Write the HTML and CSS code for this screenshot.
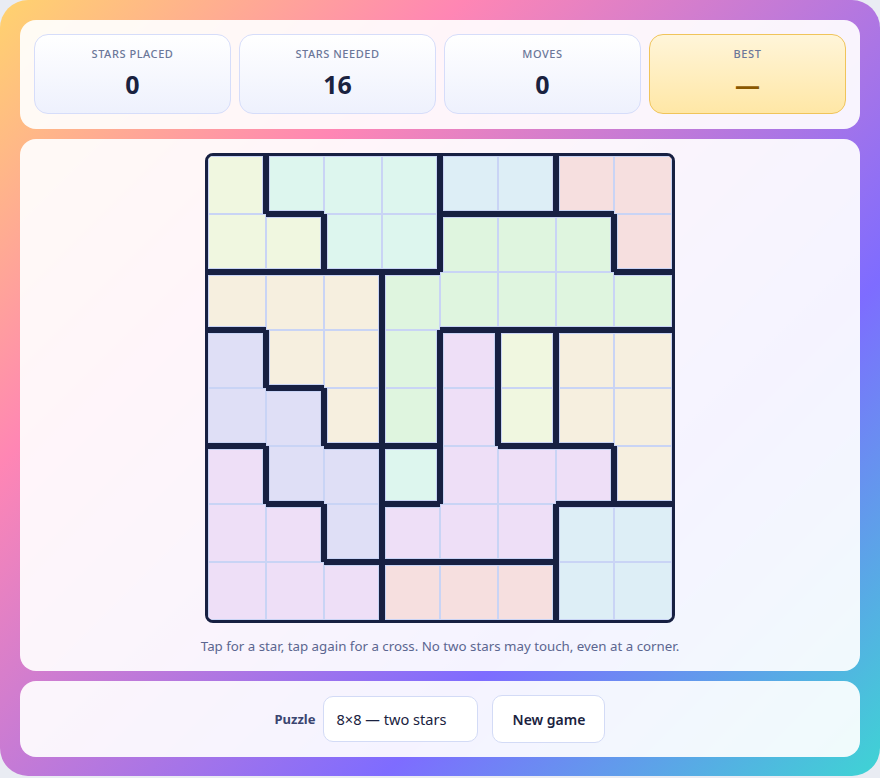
FILE: index.html
```html
<!DOCTYPE html>
<html>
<head>
  <meta charset="UTF-8">
  <title>Two Stars</title>
  <link rel="stylesheet" href="styles.css">
</head>
<body>
  <div class="app">
    <section class="panel stats">
      <div class="stat">
        <div class="stat-label">Stars placed</div>
        <div class="stat-value" id="placed">0</div>
      </div>
      <div class="stat">
        <div class="stat-label">Stars needed</div>
        <div class="stat-value" id="needed">16</div>
      </div>
      <div class="stat">
        <div class="stat-label">Moves</div>
        <div class="stat-value" id="moves">0</div>
      </div>
      <div class="stat best">
        <div class="stat-label">Best</div>
        <div class="stat-value" id="best">—</div>
      </div>
    </section>

    <section class="panel play">
      <div class="board" id="board"></div>
      <p class="hint">Tap for a star, tap again for a cross. No two stars may touch, even at a corner.</p>
    </section>

    <section class="panel controls">
      <label class="field-label" for="puzzle">Puzzle</label>
      <select id="puzzle" class="select">
        <option>8×8 — two stars</option>
      </select>
      <button class="btn" id="new-game">New game</button>
    </section>
  </div>

  <script>
    // region layout, one letter per cell
    const REGIONS = [
      'ABBBCCDD',
      'AABBEEED',
      'FFFEEEEE',
      'GFFEHIJJ',
      'GGFEHIJJ',
      'KGGLHHHJ',
      'KKGHHHMM',
      'KKKNNNMM'
    ];

    // pastel tint for each region
    const TINTS = {
      A: 'lime', B: 'mint', C: 'sky', D: 'rose', E: 'green', F: 'sand', G: 'iris',
      H: 'lilac', I: 'lime', J: 'sand', K: 'lilac', L: 'mint', M: 'sky', N: 'rose'
    };

    const board = document.getElementById('board');
    const size = REGIONS.length;
    let moves = 0;

    function regionAt(r, c) {
      if (r < 0 || c < 0 || r >= size || c >= size) return null;
      return REGIONS[r][c];
    }

    for (let r = 0; r < size; r++) {
      for (let c = 0; c < size; c++) {
        const id = REGIONS[r][c];
        const cell = document.createElement('button');
        cell.className = 'cell tint-' + TINTS[id];
        // thick walls where the neighbour belongs to another region
        const up = regionAt(r - 1, c), down = regionAt(r + 1, c);
        const left = regionAt(r, c - 1), right = regionAt(r, c + 1);
        if (up && up !== id) cell.classList.add('wall-top');
        if (down && down !== id) cell.classList.add('wall-bottom');
        if (left && left !== id) cell.classList.add('wall-left');
        if (right && right !== id) cell.classList.add('wall-right');
        cell.dataset.state = '0';
        cell.addEventListener('click', () => {
          const next = (Number(cell.dataset.state) + 1) % 3;
          cell.dataset.state = String(next);
          cell.textContent = next === 1 ? '★' : next === 2 ? '×' : '';
          moves++;
          document.getElementById('moves').textContent = moves;
          document.getElementById('placed').textContent =
            board.querySelectorAll('[data-state="1"]').length;
        });
        board.appendChild(cell);
      }
    }
  </script>
</body>
</html>
```

FILE: styles.css
```css
html, body {
  margin: 0;
  padding: 0;
}

body {
  background: #e9ecf3;
  font-family: "Segoe UI", "Noto Sans", sans-serif;
  color: #1a2240;
}

.app {
  display: flex;
  flex-direction: column;
  gap: 10px;
  padding: 20px 20px 19px;
  border-radius: 28px;
  background: linear-gradient(135deg, #ffd36e 0%, #ff86b4 28%, #7e6cff 70%, #3ed4d4 100%);
}

.panel {
  background: rgba(255, 255, 255, 0.92);
  border-radius: 16px;
}

/* score cards */
.stats {
  display: grid;
  grid-template-columns: repeat(4, 1fr);
  gap: 8px;
  padding: 14px 14px 15px;
}

.stat {
  height: 80px;
  box-sizing: border-box;
  border: 1px solid #d6ddfa;
  border-radius: 14px;
  background: linear-gradient(180deg, #ffffff, #eef1fd);
  text-align: center;
  padding-top: 11px;
}

.stat-label {
  font-size: 11px;
  font-weight: 500;
  letter-spacing: 0.05em;
  text-transform: uppercase;
  color: #6b7799;
  line-height: 16px;
}

.stat-value {
  font-size: 25px;
  font-weight: 700;
  line-height: 32px;
  margin-top: 6px;
  color: #1a2240;
}

.stat.best {
  border-color: #f0c45a;
  background: linear-gradient(180deg, #fff5d9, #ffe7a6);
}

.stat.best .stat-value {
  color: #8a5800;
}

/* board */
.play {
  display: flex;
  flex-direction: column;
  align-items: center;
  padding: 14px 14px 16px;
}

.board {
  display: grid;
  grid-template-columns: repeat(8, 58px);
  grid-template-rows: repeat(8, 58px);
  border: 3px solid #172042;
  border-radius: 8px;
  background: #172042;
  overflow: hidden;
}

.cell {
  box-sizing: border-box;
  margin: 0;
  padding: 0;
  border: 0 solid #172042;
  box-shadow: inset 0 0 0 1px #c9d4f5;
  font: 700 26px "Noto Sans", sans-serif;
  color: #172042;
  cursor: pointer;
}

.wall-top { border-top-width: 3px; }
.wall-bottom { border-bottom-width: 3px; }
.wall-left { border-left-width: 3px; }
.wall-right { border-right-width: 3px; }

.tint-lime { background: #f0f7e0; }
.tint-mint { background: #ddf6ee; }
.tint-sky { background: #ddeef6; }
.tint-rose { background: #f6dfdf; }
.tint-green { background: #dff5df; }
.tint-sand { background: #f6efdf; }
.tint-iris { background: #dfdff6; }
.tint-lilac { background: #eedff7; }

.hint {
  margin: 14px 0 0;
  font-size: 13.3px;
  line-height: 18px;
  color: #5b6690;
}

/* puzzle picker */
.controls {
  display: flex;
  justify-content: center;
  align-items: center;
  padding: 14px 14px 14px;
}

.field-label {
  font-size: 13px;
  font-weight: 700;
  color: #3b4570;
  margin-right: 8px;
}

.select {
  appearance: none;
  width: 155px;
  height: 46px;
  padding: 0 12px;
  border: 1px solid #d3dbf6;
  border-radius: 10px;
  background: #fff;
  font: 14.6px "Segoe UI", "Noto Sans", sans-serif;
  color: #1a2240;
  margin-right: 14px;
}

.btn {
  width: 113px;
  height: 48px;
  padding: 0;
  border: 1px solid #d3dbf6;
  border-radius: 10px;
  background: #fff;
  font: 600 14px "Segoe UI", "Noto Sans", sans-serif;
  color: #1a2240;
  cursor: pointer;
}
```
